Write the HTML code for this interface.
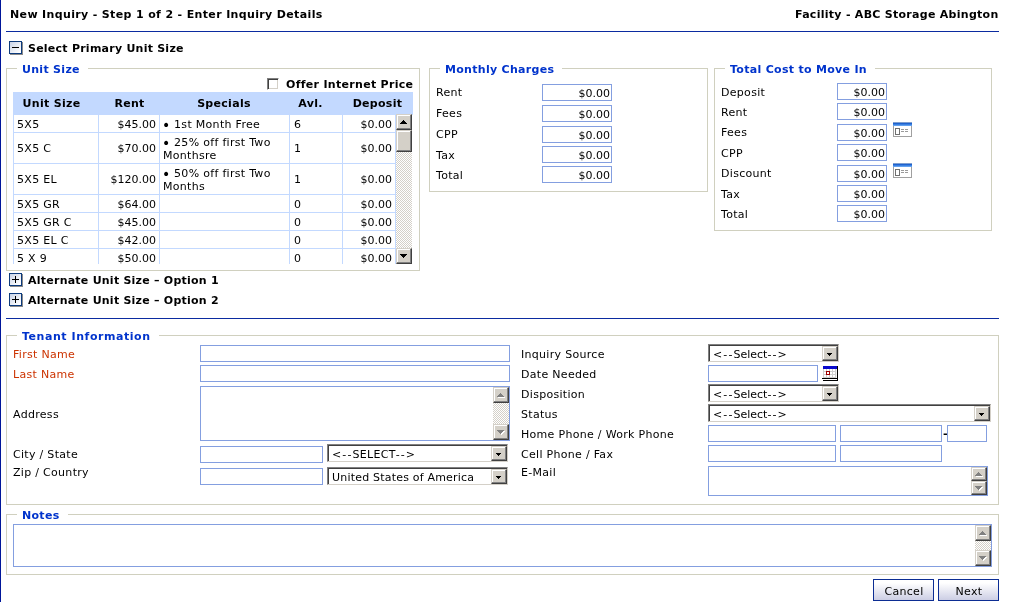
<!DOCTYPE html>
<html lang="en"><head><meta charset="utf-8"><title>New Inquiry</title>
<style>
html,body{margin:0;padding:0;background:#fff;}
body{width:1021px;height:602px;overflow:hidden;position:relative;font-family:"DejaVu Sans","Liberation Sans",sans-serif;font-size:11px;color:#000;}
#w{position:absolute;left:0;top:0;width:1021px;height:602px;will-change:transform;}
.t{position:absolute;white-space:nowrap;line-height:13px;height:13px;letter-spacing:.3px;}
.b{font-weight:bold;}
.bl{color:#0033cc;}
.rd{color:#cc3300;}
.ab{position:absolute;box-sizing:border-box;}
.hr{position:absolute;height:1px;background:#0b2ba0;overflow:hidden;}
.fs{position:absolute;box-sizing:border-box;border:1px solid #d0d0bf;}
.lg{position:absolute;background:#fff;height:13px;line-height:13px;white-space:nowrap;font-weight:bold;color:#0033cc;letter-spacing:.3px;}
.in{position:absolute;box-sizing:border-box;border:1px solid #849fe0;background:#fff;font-size:11px;line-height:13px;text-align:right;padding:2px 1px 0 0;letter-spacing:0;white-space:nowrap;overflow:hidden;}
.sel{position:absolute;box-sizing:border-box;border:1px solid;border-color:#808080 #d4d0c8 #d4d0c8 #808080;box-shadow:inset 1px 1px 0 #404040;background:#fff;}
.sel .tx{position:absolute;left:4px;top:3px;line-height:13px;letter-spacing:.3px;white-space:nowrap;}
.hy{letter-spacing:1.1px;}
.bu{font-size:14px;line-height:0;position:relative;top:2px;left:-1px;letter-spacing:0;margin-right:-1px;}
.btn3{position:absolute;box-sizing:border-box;background:#d4d0c8;border:1px solid;border-color:#d4d0c8 #404040 #404040 #d4d0c8;box-shadow:inset -1px -1px 0 #808080, inset 1px 1px 0 #fff;}
.trk{position:absolute;background-color:#eae8e3;background-image:linear-gradient(45deg,#fff 25%,transparent 25%,transparent 75%,#fff 75%),linear-gradient(45deg,#fff 25%,transparent 25%,transparent 75%,#fff 75%);background-size:2px 2px;background-position:0 0,1px 1px;background-color:#d4d0c8;}
</style></head>
<body>
<div id="w">
<div class="ab" style="left:0;top:0;width:1px;height:602px;background:#00169a"></div>
<div class="t b" style="left:10px;top:8px;letter-spacing:.355px">New Inquiry - Step 1 of 2 - Enter Inquiry Details</div>
<div class="t b" style="left:795px;top:8px;letter-spacing:.28px">Facility - ABC Storage Abington</div>
<div class="hr" style="left:6px;top:31px;width:993px"></div>
<div class="ab" style="left:9px;top:41px;width:13px;height:13px;border:1px solid #0c3a7c;background:linear-gradient(135deg,#c9d3e6,#fff 90%);box-shadow:1px 1px 0 #8a8a8a;"><div class="ab" style="left:2px;top:5px;width:7px;height:1px;background:#000"></div></div>
<div class="t b" style="left:28px;top:42px;letter-spacing:.24px">Select Primary Unit Size</div>
<div class="fs" style="left:6px;top:68px;width:414px;height:203px"></div>
<div class="lg" style="left:17px;top:63px;padding:0 8px 0 5px;">Unit Size</div>
<div class="ab" style="left:267px;top:78px;width:12px;height:12px;background:#fff;border:1px solid;border-color:#808080 #fff #fff #808080;box-shadow:inset 1px 1px 0 #404040, inset -1px -1px 0 #d4d0c8"></div>
<div class="t b" style="left:286px;top:78px;letter-spacing:.3px">Offer Internet Price</div>
<div class="ab" style="left:13px;top:92px;width:400px;height:172px;overflow:hidden">
<div class="ab" style="left:0;top:0;width:400px;height:23px;background:#c3d9ff"></div>
<div class="t b" style="left:-4px;top:5px;width:85px;text-align:center">Unit Size</div>
<div class="t b" style="left:86px;top:5px;width:61px;text-align:center">Rent</div>
<div class="t b" style="left:146px;top:5px;width:130px;text-align:center">Specials</div>
<div class="t b" style="left:271px;top:5px;width:53px;text-align:center">Avl.</div>
<div class="t b" style="left:329px;top:5px;width:71px;text-align:center">Deposit</div>
<div class="ab" style="left:0px;top:22px;width:86px;height:19px;border:1px solid #c3d9ff"></div>
<div class="ab" style="left:85px;top:22px;width:62px;height:19px;border:1px solid #c3d9ff"></div>
<div class="ab" style="left:146px;top:22px;width:131px;height:19px;border:1px solid #c3d9ff"></div>
<div class="ab" style="left:276px;top:22px;width:54px;height:19px;border:1px solid #c3d9ff"></div>
<div class="ab" style="left:329px;top:22px;width:54px;height:19px;border:1px solid #c3d9ff"></div>
<div class="t " style="left:4px;top:26px;">5X5</div>
<div class="t" style="left:85px;top:26px;width:58px;text-align:right;letter-spacing:0">$45.00</div>
<div class="t " style="left:150px;top:26px;"><span class="bu">•</span> 1st Month Free</div>
<div class="t " style="left:281px;top:26px;">6</div>
<div class="t" style="left:329px;top:26px;width:50px;text-align:right;letter-spacing:0">$0.00</div>
<div class="ab" style="left:0px;top:40px;width:86px;height:32px;border:1px solid #c3d9ff"></div>
<div class="ab" style="left:85px;top:40px;width:62px;height:32px;border:1px solid #c3d9ff"></div>
<div class="ab" style="left:146px;top:40px;width:131px;height:32px;border:1px solid #c3d9ff"></div>
<div class="ab" style="left:276px;top:40px;width:54px;height:32px;border:1px solid #c3d9ff"></div>
<div class="ab" style="left:329px;top:40px;width:54px;height:32px;border:1px solid #c3d9ff"></div>
<div class="t " style="left:4px;top:50px;">5X5 C</div>
<div class="t" style="left:85px;top:50px;width:58px;text-align:right;letter-spacing:0">$70.00</div>
<div class="t " style="left:150px;top:44px;"><span class="bu">•</span> 25% off first Two</div>
<div class="t " style="left:150px;top:57px;">Monthsre</div>
<div class="t " style="left:281px;top:50px;">1</div>
<div class="t" style="left:329px;top:50px;width:50px;text-align:right;letter-spacing:0">$0.00</div>
<div class="ab" style="left:0px;top:71px;width:86px;height:32px;border:1px solid #c3d9ff"></div>
<div class="ab" style="left:85px;top:71px;width:62px;height:32px;border:1px solid #c3d9ff"></div>
<div class="ab" style="left:146px;top:71px;width:131px;height:32px;border:1px solid #c3d9ff"></div>
<div class="ab" style="left:276px;top:71px;width:54px;height:32px;border:1px solid #c3d9ff"></div>
<div class="ab" style="left:329px;top:71px;width:54px;height:32px;border:1px solid #c3d9ff"></div>
<div class="t " style="left:4px;top:81px;">5X5 EL</div>
<div class="t" style="left:85px;top:81px;width:58px;text-align:right;letter-spacing:0">$120.00</div>
<div class="t " style="left:150px;top:75px;"><span class="bu">•</span> 50% off first Two</div>
<div class="t " style="left:150px;top:88px;">Months</div>
<div class="t " style="left:281px;top:81px;">1</div>
<div class="t" style="left:329px;top:81px;width:50px;text-align:right;letter-spacing:0">$0.00</div>
<div class="ab" style="left:0px;top:102px;width:86px;height:19px;border:1px solid #c3d9ff"></div>
<div class="ab" style="left:85px;top:102px;width:62px;height:19px;border:1px solid #c3d9ff"></div>
<div class="ab" style="left:146px;top:102px;width:131px;height:19px;border:1px solid #c3d9ff"></div>
<div class="ab" style="left:276px;top:102px;width:54px;height:19px;border:1px solid #c3d9ff"></div>
<div class="ab" style="left:329px;top:102px;width:54px;height:19px;border:1px solid #c3d9ff"></div>
<div class="t " style="left:4px;top:106px;">5X5 GR</div>
<div class="t" style="left:85px;top:106px;width:58px;text-align:right;letter-spacing:0">$64.00</div>
<div class="t " style="left:281px;top:106px;">0</div>
<div class="t" style="left:329px;top:106px;width:50px;text-align:right;letter-spacing:0">$0.00</div>
<div class="ab" style="left:0px;top:120px;width:86px;height:19px;border:1px solid #c3d9ff"></div>
<div class="ab" style="left:85px;top:120px;width:62px;height:19px;border:1px solid #c3d9ff"></div>
<div class="ab" style="left:146px;top:120px;width:131px;height:19px;border:1px solid #c3d9ff"></div>
<div class="ab" style="left:276px;top:120px;width:54px;height:19px;border:1px solid #c3d9ff"></div>
<div class="ab" style="left:329px;top:120px;width:54px;height:19px;border:1px solid #c3d9ff"></div>
<div class="t " style="left:4px;top:124px;">5X5 GR C</div>
<div class="t" style="left:85px;top:124px;width:58px;text-align:right;letter-spacing:0">$45.00</div>
<div class="t " style="left:281px;top:124px;">0</div>
<div class="t" style="left:329px;top:124px;width:50px;text-align:right;letter-spacing:0">$0.00</div>
<div class="ab" style="left:0px;top:138px;width:86px;height:19px;border:1px solid #c3d9ff"></div>
<div class="ab" style="left:85px;top:138px;width:62px;height:19px;border:1px solid #c3d9ff"></div>
<div class="ab" style="left:146px;top:138px;width:131px;height:19px;border:1px solid #c3d9ff"></div>
<div class="ab" style="left:276px;top:138px;width:54px;height:19px;border:1px solid #c3d9ff"></div>
<div class="ab" style="left:329px;top:138px;width:54px;height:19px;border:1px solid #c3d9ff"></div>
<div class="t " style="left:4px;top:142px;">5X5 EL C</div>
<div class="t" style="left:85px;top:142px;width:58px;text-align:right;letter-spacing:0">$42.00</div>
<div class="t " style="left:281px;top:142px;">0</div>
<div class="t" style="left:329px;top:142px;width:50px;text-align:right;letter-spacing:0">$0.00</div>
<div class="ab" style="left:0px;top:156px;width:86px;height:19px;border:1px solid #c3d9ff"></div>
<div class="ab" style="left:85px;top:156px;width:62px;height:19px;border:1px solid #c3d9ff"></div>
<div class="ab" style="left:146px;top:156px;width:131px;height:19px;border:1px solid #c3d9ff"></div>
<div class="ab" style="left:276px;top:156px;width:54px;height:19px;border:1px solid #c3d9ff"></div>
<div class="ab" style="left:329px;top:156px;width:54px;height:19px;border:1px solid #c3d9ff"></div>
<div class="t " style="left:4px;top:160px;">5 X 9</div>
<div class="t" style="left:85px;top:160px;width:58px;text-align:right;letter-spacing:0">$50.00</div>
<div class="t " style="left:281px;top:160px;">0</div>
<div class="t" style="left:329px;top:160px;width:50px;text-align:right;letter-spacing:0">$0.00</div>
</div>
<div class="trk" style="left:396px;top:114px;width:16px;height:150px"></div>
<div class="btn3" style="left:396px;top:114px;width:16px;height:16px"><svg class="ab" style="left:3px;top:5px" width="8" height="5" viewBox="0 0 8 5" shape-rendering="crispEdges"><rect x="3" y="0" width="1" height="1" fill="#000"/><rect x="2" y="1" width="3" height="1" fill="#000"/><rect x="1" y="2" width="5" height="1" fill="#000"/><rect x="0" y="3" width="7" height="1" fill="#000"/></svg></div>
<div class="btn3" style="left:396px;top:248px;width:16px;height:16px"><svg class="ab" style="left:3px;top:5px" width="8" height="5" viewBox="0 0 8 5" shape-rendering="crispEdges"><rect x="0" y="0" width="7" height="1" fill="#000"/><rect x="1" y="1" width="5" height="1" fill="#000"/><rect x="2" y="2" width="3" height="1" fill="#000"/><rect x="3" y="3" width="1" height="1" fill="#000"/></svg></div>
<div class="btn3" style="left:396px;top:130px;width:16px;height:22px"></div>
<div class="fs" style="left:429px;top:68px;width:279px;height:124px"></div>
<div class="lg" style="left:440px;top:63px;padding:0 8px 0 5px;">Monthly Charges</div>
<div class="t " style="left:436px;top:86px;">Rent</div>
<div class="in" style="left:542px;top:84px;width:70px;height:17px">$0.00</div>
<div class="t " style="left:436px;top:107px;">Fees</div>
<div class="in" style="left:542px;top:105px;width:70px;height:17px">$0.00</div>
<div class="t " style="left:436px;top:128px;">CPP</div>
<div class="in" style="left:542px;top:126px;width:70px;height:17px">$0.00</div>
<div class="t " style="left:436px;top:149px;">Tax</div>
<div class="in" style="left:542px;top:146px;width:70px;height:17px">$0.00</div>
<div class="t " style="left:436px;top:169px;">Total</div>
<div class="in" style="left:542px;top:166px;width:70px;height:17px">$0.00</div>
<div class="fs" style="left:714px;top:68px;width:278px;height:163px"></div>
<div class="lg" style="left:725px;top:63px;padding:0 8px 0 5px;">Total Cost to Move In</div>
<div class="t " style="left:721px;top:86px;">Deposit</div>
<div class="in" style="left:837px;top:83px;width:50px;height:17px">$0.00</div>
<div class="t " style="left:721px;top:106px;">Rent</div>
<div class="in" style="left:837px;top:103px;width:50px;height:17px">$0.00</div>
<div class="t " style="left:721px;top:126px;">Fees</div>
<div class="in" style="left:837px;top:124px;width:50px;height:17px">$0.00</div>
<div class="t " style="left:721px;top:147px;">CPP</div>
<div class="in" style="left:837px;top:144px;width:50px;height:17px">$0.00</div>
<div class="t " style="left:721px;top:167px;">Discount</div>
<div class="in" style="left:837px;top:165px;width:50px;height:17px">$0.00</div>
<div class="t " style="left:721px;top:188px;">Tax</div>
<div class="in" style="left:837px;top:185px;width:50px;height:17px">$0.00</div>
<div class="t " style="left:721px;top:208px;">Total</div>
<div class="in" style="left:837px;top:205px;width:50px;height:17px">$0.00</div>
<svg class="ab" style="left:893px;top:122px" width="19" height="15" viewBox="0 0 19 15" shape-rendering="crispEdges"><rect x="0.5" y="0.5" width="18" height="14" fill="#fff" stroke="#a0a0a0"/><rect x="0" y="0" width="19" height="1" fill="#7f9fcf"/><rect x="0" y="1" width="19" height="1" fill="#1f62cf"/><rect x="0" y="2" width="19" height="1" fill="#3a80e0"/><rect x="0" y="3" width="19" height="1" fill="#62a0ee"/><rect x="2.5" y="6.5" width="4" height="6" fill="#fff" stroke="#707070"/><path d="M8 7.5h3M12 7.5h3M8 9.5h3M12 9.5h3" stroke="#9a9a9a"/></svg>
<svg class="ab" style="left:893px;top:163px" width="19" height="15" viewBox="0 0 19 15" shape-rendering="crispEdges"><rect x="0.5" y="0.5" width="18" height="14" fill="#fff" stroke="#a0a0a0"/><rect x="0" y="0" width="19" height="1" fill="#7f9fcf"/><rect x="0" y="1" width="19" height="1" fill="#1f62cf"/><rect x="0" y="2" width="19" height="1" fill="#3a80e0"/><rect x="0" y="3" width="19" height="1" fill="#62a0ee"/><rect x="2.5" y="6.5" width="4" height="6" fill="#fff" stroke="#707070"/><path d="M8 7.5h3M12 7.5h3M8 9.5h3M12 9.5h3" stroke="#9a9a9a"/></svg>
<div class="ab" style="left:9px;top:273px;width:13px;height:13px;border:1px solid #0c3a7c;background:linear-gradient(135deg,#c9d3e6,#fff 90%);box-shadow:1px 1px 0 #8a8a8a;"><div class="ab" style="left:2px;top:5px;width:7px;height:1px;background:#000"></div><div class="ab" style="left:5px;top:2px;width:1px;height:7px;background:#000"></div></div>
<div class="t b" style="left:28px;top:274px;letter-spacing:.24px">Alternate Unit Size – Option 1</div>
<div class="ab" style="left:9px;top:293px;width:13px;height:13px;border:1px solid #0c3a7c;background:linear-gradient(135deg,#c9d3e6,#fff 90%);box-shadow:1px 1px 0 #8a8a8a;"><div class="ab" style="left:2px;top:5px;width:7px;height:1px;background:#000"></div><div class="ab" style="left:5px;top:2px;width:1px;height:7px;background:#000"></div></div>
<div class="t b" style="left:28px;top:294px;letter-spacing:.24px">Alternate Unit Size – Option 2</div>
<div class="hr" style="left:6px;top:318px;width:993px"></div>
<div class="fs" style="left:6px;top:335px;width:993px;height:170px"></div>
<div class="lg" style="left:17px;top:330px;padding:0 8px 0 5px;letter-spacing:0.55px;">Tenant Information</div>
<div class="t rd" style="left:13px;top:348px;">First Name</div>
<div class="t rd" style="left:13px;top:368px;">Last Name</div>
<div class="t " style="left:13px;top:408px;">Address</div>
<div class="t " style="left:13px;top:448px;">City / State</div>
<div class="t " style="left:13px;top:466px;">Zip / Country</div>
<div class="in" style="left:200px;top:345px;width:310px;height:17px"></div>
<div class="in" style="left:200px;top:365px;width:310px;height:17px"></div>
<div class="in" style="left:200px;top:386px;width:310px;height:55px"></div>
<div class="trk" style="left:493px;top:387px;width:16px;height:53px"></div>
<div class="btn3" style="left:493px;top:387px;width:16px;height:16px"><svg class="ab" style="left:3px;top:5px" width="8" height="5" viewBox="0 0 8 5" shape-rendering="crispEdges"><rect x="4" y="1" width="1" height="1" fill="#fff"/><rect x="3" y="2" width="3" height="1" fill="#fff"/><rect x="2" y="3" width="5" height="1" fill="#fff"/><rect x="1" y="4" width="7" height="1" fill="#fff"/><rect x="3" y="0" width="1" height="1" fill="#808080"/><rect x="2" y="1" width="3" height="1" fill="#808080"/><rect x="1" y="2" width="5" height="1" fill="#808080"/><rect x="0" y="3" width="7" height="1" fill="#808080"/></svg></div>
<div class="btn3" style="left:493px;top:424px;width:16px;height:16px"><svg class="ab" style="left:3px;top:5px" width="8" height="5" viewBox="0 0 8 5" shape-rendering="crispEdges"><rect x="1" y="1" width="7" height="1" fill="#fff"/><rect x="2" y="2" width="5" height="1" fill="#fff"/><rect x="3" y="3" width="3" height="1" fill="#fff"/><rect x="4" y="4" width="1" height="1" fill="#fff"/><rect x="0" y="0" width="7" height="1" fill="#808080"/><rect x="1" y="1" width="5" height="1" fill="#808080"/><rect x="2" y="2" width="3" height="1" fill="#808080"/><rect x="3" y="3" width="1" height="1" fill="#808080"/></svg></div>
<div class="in" style="left:200px;top:446px;width:123px;height:17px"></div>
<div class="sel" style="left:327px;top:444px;width:181px;height:18px"><span class="tx"><span class="hy">&lt;--</span>SELECT<span class="hy">--</span>&gt;</span></div>
<div class="btn3" style="left:491px;top:446px;width:16px;height:15px"><svg class="ab" style="left:4px;top:6px" width="8" height="5" viewBox="0 0 8 5" shape-rendering="crispEdges"><rect x="0" y="0" width="5" height="1" fill="#000"/><rect x="1" y="1" width="3" height="1" fill="#000"/><rect x="2" y="2" width="1" height="1" fill="#000"/></svg></div>
<div class="in" style="left:200px;top:468px;width:123px;height:17px"></div>
<div class="sel" style="left:327px;top:467px;width:181px;height:18px"><span class="tx" style="letter-spacing:.2px">United States of America</span></div>
<div class="btn3" style="left:491px;top:469px;width:16px;height:15px"><svg class="ab" style="left:4px;top:6px" width="8" height="5" viewBox="0 0 8 5" shape-rendering="crispEdges"><rect x="0" y="0" width="5" height="1" fill="#000"/><rect x="1" y="1" width="3" height="1" fill="#000"/><rect x="2" y="2" width="1" height="1" fill="#000"/></svg></div>
<div class="t " style="left:521px;top:348px;">Inquiry Source</div>
<div class="t " style="left:521px;top:368px;">Date Needed</div>
<div class="t " style="left:521px;top:388px;">Disposition</div>
<div class="t " style="left:521px;top:408px;">Status</div>
<div class="t " style="left:521px;top:428px;">Home Phone / Work Phone</div>
<div class="t " style="left:521px;top:448px;">Cell Phone / Fax</div>
<div class="t " style="left:521px;top:466px;">E-Mail</div>
<div class="sel" style="left:708px;top:344px;width:131px;height:18px"><span class="tx"><span class="hy">&lt;--</span><span style="letter-spacing:0">Select</span><span class="hy">--</span>&gt;</span></div>
<div class="btn3" style="left:822px;top:346px;width:16px;height:15px"><svg class="ab" style="left:4px;top:6px" width="8" height="5" viewBox="0 0 8 5" shape-rendering="crispEdges"><rect x="0" y="0" width="5" height="1" fill="#000"/><rect x="1" y="1" width="3" height="1" fill="#000"/><rect x="2" y="2" width="1" height="1" fill="#000"/></svg></div>
<div class="in" style="left:708px;top:365px;width:110px;height:17px"></div>
<div class="sel" style="left:708px;top:384px;width:131px;height:18px"><span class="tx"><span class="hy">&lt;--</span><span style="letter-spacing:0">Select</span><span class="hy">--</span>&gt;</span></div>
<div class="btn3" style="left:822px;top:386px;width:16px;height:15px"><svg class="ab" style="left:4px;top:6px" width="8" height="5" viewBox="0 0 8 5" shape-rendering="crispEdges"><rect x="0" y="0" width="5" height="1" fill="#000"/><rect x="1" y="1" width="3" height="1" fill="#000"/><rect x="2" y="2" width="1" height="1" fill="#000"/></svg></div>
<div class="sel" style="left:708px;top:404px;width:283px;height:18px"><span class="tx"><span class="hy">&lt;--</span><span style="letter-spacing:0">Select</span><span class="hy">--</span>&gt;</span></div>
<div class="btn3" style="left:974px;top:406px;width:16px;height:15px"><svg class="ab" style="left:4px;top:6px" width="8" height="5" viewBox="0 0 8 5" shape-rendering="crispEdges"><rect x="0" y="0" width="5" height="1" fill="#000"/><rect x="1" y="1" width="3" height="1" fill="#000"/><rect x="2" y="2" width="1" height="1" fill="#000"/></svg></div>
<div class="in" style="left:708px;top:425px;width:128px;height:17px"></div>
<div class="in" style="left:840px;top:425px;width:102px;height:17px"></div>
<div class="t b" style="left:943px;top:427px;">-</div>
<div class="in" style="left:947px;top:425px;width:40px;height:17px"></div>
<div class="in" style="left:708px;top:445px;width:128px;height:17px"></div>
<div class="in" style="left:840px;top:445px;width:102px;height:17px"></div>
<div class="in" style="left:708px;top:466px;width:280px;height:30px"></div>
<div class="btn3" style="left:971px;top:467px;width:16px;height:14px"><svg class="ab" style="left:3px;top:4px" width="8" height="5" viewBox="0 0 8 5" shape-rendering="crispEdges"><rect x="4" y="1" width="1" height="1" fill="#fff"/><rect x="3" y="2" width="3" height="1" fill="#fff"/><rect x="2" y="3" width="5" height="1" fill="#fff"/><rect x="1" y="4" width="7" height="1" fill="#fff"/><rect x="3" y="0" width="1" height="1" fill="#808080"/><rect x="2" y="1" width="3" height="1" fill="#808080"/><rect x="1" y="2" width="5" height="1" fill="#808080"/><rect x="0" y="3" width="7" height="1" fill="#808080"/></svg></div>
<div class="btn3" style="left:971px;top:481px;width:16px;height:14px"><svg class="ab" style="left:3px;top:4px" width="8" height="5" viewBox="0 0 8 5" shape-rendering="crispEdges"><rect x="1" y="1" width="7" height="1" fill="#fff"/><rect x="2" y="2" width="5" height="1" fill="#fff"/><rect x="3" y="3" width="3" height="1" fill="#fff"/><rect x="4" y="4" width="1" height="1" fill="#fff"/><rect x="0" y="0" width="7" height="1" fill="#808080"/><rect x="1" y="1" width="5" height="1" fill="#808080"/><rect x="2" y="2" width="3" height="1" fill="#808080"/><rect x="3" y="3" width="1" height="1" fill="#808080"/></svg></div>
<svg class="ab" style="left:822px;top:366px" width="16" height="15" viewBox="0 0 16 15" shape-rendering="crispEdges"><rect x="1" y="0" width="14" height="3" fill="#0a0acc"/><rect x="15" y="0" width="1" height="15" fill="#000"/><rect x="1" y="3" width="14" height="9" fill="#cfcfcf"/><rect x="2" y="3" width="2" height="2" fill="#fff"/><rect x="2" y="6" width="2" height="2" fill="#fff"/><rect x="2" y="9" width="2" height="2" fill="#fff"/><rect x="5" y="3" width="2" height="2" fill="#fff"/><rect x="5" y="6" width="2" height="2" fill="#fff"/><rect x="5" y="9" width="2" height="2" fill="#fff"/><rect x="8" y="3" width="2" height="2" fill="#fff"/><rect x="8" y="6" width="2" height="2" fill="#fff"/><rect x="8" y="9" width="2" height="2" fill="#fff"/><rect x="11" y="3" width="2" height="2" fill="#fff"/><rect x="11" y="6" width="2" height="2" fill="#fff"/><rect x="11" y="9" width="2" height="2" fill="#fff"/><rect x="14" y="3" width="1" height="9" fill="#f4f4f4"/><rect x="4.5" y="5.5" width="3" height="3" fill="#fff" stroke="#a00000"/><rect x="0" y="12" width="15" height="1" fill="#000"/><rect x="1" y="14" width="15" height="1" fill="#000"/></svg>
<div class="fs" style="left:6px;top:514px;width:993px;height:61px"></div>
<div class="lg" style="left:17px;top:509px;padding:0 8px 0 5px;">Notes</div>
<div class="in" style="left:13px;top:524px;width:979px;height:43px"></div>
<div class="trk" style="left:975px;top:525px;width:16px;height:41px"></div>
<div class="btn3" style="left:975px;top:525px;width:16px;height:16px"><svg class="ab" style="left:3px;top:5px" width="8" height="5" viewBox="0 0 8 5" shape-rendering="crispEdges"><rect x="4" y="1" width="1" height="1" fill="#fff"/><rect x="3" y="2" width="3" height="1" fill="#fff"/><rect x="2" y="3" width="5" height="1" fill="#fff"/><rect x="1" y="4" width="7" height="1" fill="#fff"/><rect x="3" y="0" width="1" height="1" fill="#808080"/><rect x="2" y="1" width="3" height="1" fill="#808080"/><rect x="1" y="2" width="5" height="1" fill="#808080"/><rect x="0" y="3" width="7" height="1" fill="#808080"/></svg></div>
<div class="btn3" style="left:975px;top:550px;width:16px;height:16px"><svg class="ab" style="left:3px;top:5px" width="8" height="5" viewBox="0 0 8 5" shape-rendering="crispEdges"><rect x="1" y="1" width="7" height="1" fill="#fff"/><rect x="2" y="2" width="5" height="1" fill="#fff"/><rect x="3" y="3" width="3" height="1" fill="#fff"/><rect x="4" y="4" width="1" height="1" fill="#fff"/><rect x="0" y="0" width="7" height="1" fill="#808080"/><rect x="1" y="1" width="5" height="1" fill="#808080"/><rect x="2" y="2" width="3" height="1" fill="#808080"/><rect x="3" y="3" width="1" height="1" fill="#808080"/></svg></div>
<div class="ab" style="left:873px;top:579px;width:61px;height:22px;border:1px solid #0c2d93;background:linear-gradient(#fff 15%,#ccCEe4);text-align:center;line-height:23px;padding-left:1px;letter-spacing:.3px;">Cancel</div>
<div class="ab" style="left:938px;top:579px;width:61px;height:22px;border:1px solid #0c2d93;background:linear-gradient(#fff 15%,#ccCEe4);text-align:center;line-height:23px;padding-left:1px;letter-spacing:.3px;">Next</div>
</div>
</body></html>
